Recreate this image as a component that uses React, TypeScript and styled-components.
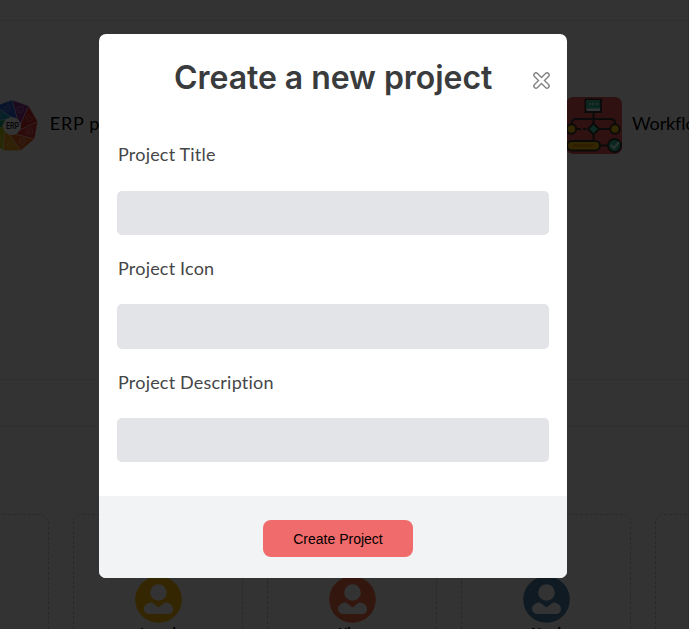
import React from "react";
import styled, { createGlobalStyle } from "styled-components";

const GlobalStyle = createGlobalStyle`
  * { box-sizing: border-box; }
  body { margin: 0; background: #fff; overflow: hidden; }
`;

const Screen = styled.div`
  position: relative;
  width: 689px;
  height: 629px;
  overflow: hidden;
  background: #fff;
  font-family: Inter, "Liberation Sans", sans-serif;
`;

const Page = styled.div`
  display: flex;
  flex-direction: column;
  height: 100%;
  border-right: 1px solid #ebebeb;
  padding-top: 20px;
`;

const ProjectPanel = styled.section`
  flex: none;
  height: 360px;
  border-top: 1px solid #ebebeb;
  border-bottom: 1px solid #ebebeb;
  padding-top: 76px;
  display: grid;
  grid-template-columns: 585px 300px;
  align-items: start;
`;

const Project = styled.div<{ $shift: number }>`
  display: flex;
  align-items: center;
  height: 57px;
  gap: 10px;
  margin-left: ${(p) => p.$shift}px;
`;

const ProjectName = styled.span<{ $spacing: number }>`
  font: 400 18px/24px Lato, sans-serif;
  letter-spacing: ${(p) => p.$spacing}px;
  white-space: nowrap;
  color: #000;
  margin-top: -5px;
`;

const Divider = styled.div`
  height: 47px;
  border-bottom: 1px solid #ebebeb;
  flex: none;
`;

const Team = styled.section`
  display: flex;
  gap: 24px;
  margin: 87px 0 0 -121px;
`;

const MemberCard = styled.div`
  flex: none;
  width: 170px;
  height: 190px;
  border: 1px dashed #cdcdcd;
  border-radius: 9px;
  padding-top: 61px;
  display: flex;
  flex-direction: column;
  align-items: center;
`;

const MemberName = styled.span`
  font: 700 13px/16px "Noto Sans", sans-serif;
  color: #000;
  margin-top: 1px;
`;

const Overlay = styled.div`
  position: absolute;
  inset: 0;
  background: rgba(0, 0, 0, 0.8);
  display: flex;
  align-items: flex-start;
  padding: 34px 0 0 99px;
`;

const Dialog = styled.form`
  width: 468px;
  height: 544px;
  border-radius: 7px;
  background: #fff;
  overflow: hidden;
  display: flex;
  flex-direction: column;
`;

const DialogHeader = styled.header`
  display: grid;
  grid-template-columns: 1fr 20px;
  align-items: center;
  height: 92px;
  padding: 0 15px 0 18px;
`;

const Title = styled.h2`
  margin: -4px 0 0 57px;
  font: 600 32px/42px Inter, sans-serif;
  letter-spacing: -0.05px;
  color: #3a3b3d;
  white-space: nowrap;
`;

const CloseButton = styled.button`
  border: 0;
  padding: 0;
  width: 20px;
  height: 20px;
  background: none;
  display: flex;
`;

const Fields = styled.div`
  padding: 16px 18px 0;
  display: grid;
  grid-template-rows: 114px 114px 113px;
  flex: 1;
`;

const Field = styled.label<{ $gap: number; $height: number }>`
  display: grid;
  grid-template-rows: 24px ${(p) => p.$height}px;
  align-content: start;
  row-gap: ${(p) => p.$gap}px;
`;

const FieldLabel = styled.span`
  font: 400 18px/24px Lato, sans-serif;
  letter-spacing: 0.2px;
  padding-left: 1px;
  color: #454648;
`;

const FieldInput = styled.input`
  width: 100%;
  height: 100%;
  border: 0;
  border-radius: 5px;
  background: #e3e4e8;
`;

const DialogFooter = styled.footer`
  height: 82px;
  background: #f1f3f5;
  padding: 24px 0 0 164px;
`;

const SubmitButton = styled.button`
  width: 150px;
  height: 37px;
  border: 0;
  border-radius: 8px;
  background: #f06b6b;
  color: #000;
  font: 14px/18px "Liberation Sans", Arial, sans-serif;
  padding: 1px 0 0;
  display: block;
`;

const wheelColors = ["#8b2f8f", "#d02b2b", "#dd3a35", "#ee6a24", "#f3a012", "#b9c712", "#119c6d", "#1a9fc4", "#2d5fd4"];

function ErpLogo() {
  const n = 9;
  const point = (i: number, r: number) => {
    const a = ((i * 360) / n - 90) * (Math.PI / 180);
    return `${(26 + r * Math.cos(a)).toFixed(2)},${(26 + r * Math.sin(a)).toFixed(2)}`;
  };
  return (
    <svg width="52" height="52" viewBox="0 0 52 52">
      {Array.from({ length: n }, (_, i) => (
        <polygon
          key={i}
          points={`${point(i, 26)} ${point(i + 1, 26)} ${point(i + 1.9, 9)} ${point(i + 0.9, 9)}`}
          fill={wheelColors[i]}
          stroke="#fff"
          strokeOpacity=".7"
          strokeWidth=".5"
        />
      ))}
      {Array.from({ length: n }, (_, i) => {
        const [x, y] = point(i + 0.65, 18.5).split(",").map(Number);
        return (
          <g key={i} transform={`translate(${x} ${y}) rotate(${i * 40})`} stroke="#fff" strokeOpacity=".4" fill="none" strokeWidth=".7">
            <rect x="-3" y="-2.5" width="6" height="4" />
            <path d="M-2 3.2h4M-1-1h2" />
          </g>
        );
      })}
      <circle cx="26" cy="26" r="8.7" fill="#fff" />
      <text x="26.5" y="29" textAnchor="middle" fontFamily="Roboto" fontWeight="500" fontSize="8.5" textLength="13" lengthAdjust="spacingAndGlyphs" fill="#222">ERP</text>
    </svg>
  );
}

function WorkflowLogo() {
  return (
    <svg width="56" height="57" viewBox="0 0 56 57">
      <rect width="56" height="57" rx="7" fill="#f05656" />
      <g stroke="#333" strokeWidth="2" fill="none">
        <path d="M27.500 15v13M6 28v-2q0-4 4-4h34q5 0 5 4v2M10 32h5m2 0h3m13 0h11M27.500 37v7M34 48.500h8" />
        <rect x="19.500" y="2.500" width="15.500" height="12.500" fill="#f8fffc" />
        <path d="M20.500 3.500h13.500v8H20.500z" fill="#2fc39b" stroke="none" />
        <path d="M23 7h2m1.500 0h2m1.500 0h2" stroke="#fff" strokeWidth="1.500" />
        <path d="M27.500 26.500 33 32l-5.500 5.500L22 32z" fill="#46d8b0" />
        <circle cx="5.500" cy="32" r="4.700" fill="#ffc107" />
        <circle cx="49" cy="32" r="4.700" fill="#ffc107" />
        <rect x="1" y="44" width="33" height="9.500" rx="4.700" fill="#ffc107" />
        <path d="M7 48.500h21" stroke="#f39200" strokeWidth="2.500" />
        <circle cx="48.500" cy="48.500" r="6.500" fill="#2fc39b" />
        <path d="m45 48 3 3 5-6" stroke="#d5fff4" />
      </g>
    </svg>
  );
}

function Avatar({ color }: { color: string }) {
  return (
    <svg width="47" height="47" viewBox="0 0 47 47">
      <circle cx="23.500" cy="23.500" r="23.300" fill={color} />
      <circle cx="23.500" cy="16.500" r="8.300" fill="#fff" />
      <path d="M17 26.500l6.500 5 6.500-5c4 0 8 2.500 8 6.500 0 3-2 5-5 5H15c-3 0-6-2-6-5 0-4 4-6.500 8-6.500z" fill="#fff" />
    </svg>
  );
}

function CloseIcon() {
  return (
    <svg width="20" height="20" viewBox="0 0 20 20" strokeLinecap="round">
      <path d="M4 5l11 11M15 5l-11 11" stroke="#808080" strokeWidth="5.600" />
      <path d="M4 5l11 11M15 5l-11 11" stroke="#fff" strokeWidth="2.900" />
    </svg>
  );
}

const members = [
  { name: "", color: "#fff" },
  { name: "Jamel", color: "#ffbe00" },
  { name: "Vlas", color: "#ff7040" },
  { name: "Noel", color: "#4b82aa" },
  { name: "", color: "#fff" },
];

const fields = [
  { label: "Project Title", gap: 25, height: 44 },
  { label: "Project Icon", gap: 24, height: 45 },
  { label: "Project Description", gap: 24, height: 44 },
];

export default function App() {
  return (
    <Screen>
      <GlobalStyle />
      <Page>
        <ProjectPanel>
          <Project $shift={-14}>
            <ErpLogo />
            <ProjectName $spacing={0.7}>&#8202;ERP project</ProjectName>
          </Project>
          <Project $shift={-19}>
            <WorkflowLogo />
            <ProjectName $spacing={-0.1}>Workflow</ProjectName>
          </Project>
        </ProjectPanel>
        <Divider />
        <Team>
          {members.map((m, i) => (
            <MemberCard key={i}>
              {m.name && <Avatar color={m.color} />}
              <MemberName>{m.name}</MemberName>
            </MemberCard>
          ))}
        </Team>
      </Page>
      <Overlay>
        <Dialog onSubmit={(e) => e.preventDefault()}>
          <DialogHeader>
            <Title>Create a new project</Title>
            <CloseButton type="button" aria-label="Close">
              <CloseIcon />
            </CloseButton>
          </DialogHeader>
          <Fields>
            {fields.map((f) => (
              <Field key={f.label} $gap={f.gap} $height={f.height}>
                <FieldLabel>{f.label}</FieldLabel>
                <FieldInput />
              </Field>
            ))}
          </Fields>
          <DialogFooter>
            <SubmitButton type="submit">Create Project</SubmitButton>
          </DialogFooter>
        </Dialog>
      </Overlay>
    </Screen>
  );
}
